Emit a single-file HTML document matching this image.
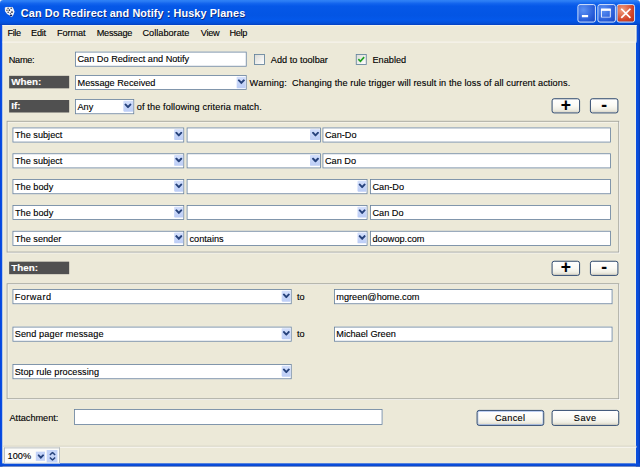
<!DOCTYPE html>
<html><head><meta charset="utf-8"><title>Can Do Redirect and Notify : Husky Planes</title>
<style>
html,body{margin:0;padding:0;}
body{width:640px;height:467px;overflow:hidden;background:#ece9d8;}
#w{position:absolute;left:0;top:0;width:768px;height:560px;transform:scale(0.833333);transform-origin:0 0;font-family:"Liberation Sans",sans-serif;font-size:11px;color:#000;background:#ece9d8;overflow:hidden;-webkit-text-stroke:0.15px currentColor;font-kerning:none;}
#w div,#w span,#w i,#w b,#w svg{position:absolute;box-sizing:border-box;}
#title{left:0;top:0;width:768px;height:30px;background:linear-gradient(#2f82f6 0,#2a7cf4 5%,#1466ee 13%,#0558e8 24%,#0355e4 60%,#0458ea 80%,#0450d8 93%,#033fc0 100%);border-radius:4px 4px 0 0;}
#title .t{left:25px;top:9.1px;-webkit-text-stroke:0;letter-spacing:0.12px;color:#fff;font-weight:bold;font-size:13px;line-height:16px;white-space:nowrap;text-shadow:1px 1px 0 #0a2a80;}
.tb{top:5px;width:22px;height:21.5px;border:1px solid #fff;border-radius:3px;background:radial-gradient(circle at 30% 30%,#5c92f4,#2458d6 70%,#1a48c0);}
#cls{background:radial-gradient(circle at 30% 30%,#f0a080,#d4462a 60%,#b83018);}
#bl{left:0;top:30px;width:3.4px;height:530px;background:linear-gradient(90deg,#0540d8,#0a50e6 50%,#0648d8);}
#br{left:762.9px;top:30px;width:5.1px;height:530px;background:linear-gradient(90deg,#0a50e0,#0a4cd8 60%,#0536b0);}
#bb{left:0;top:555.6px;width:768px;height:4.4px;background:linear-gradient(#0a50e0,#0a4cd8 60%,#0536b0);}
#menu{left:4px;top:30px;width:760px;height:20px;background:#ece9d8;}
#menu span{top:2px;line-height:14px;font-size:11px;white-space:nowrap;}
.l{font-size:11px;line-height:13px;white-space:nowrap;margin-top:1px;}
.dk{background:#505050;color:#fff;font-weight:bold;font-size:11.8px;line-height:14px;padding-left:2.8px;height:15px;width:72.4px;left:10.7px;white-space:nowrap;}
.in,.se{background:#fff;border:1px solid #69829c;font-size:11px;line-height:15px;padding:1px 0 0 2px;white-space:nowrap;overflow:hidden;height:18.3px;}
.se i{right:0;top:1px;width:11.5px;height:13.6px;background:linear-gradient(#d3dffb,#bccdf6);border-radius:1px;}
.se i svg{left:1.2px;top:3.2px;width:9.2px;height:6.6px;}
.bx{border:1px solid #9c9e9a;box-shadow:inset 1px 1px 0 #fcfcf8,1px 1px 0 #fcfcf8;}
.bt{border:1px solid #0c2d5e;border-radius:3px;background:linear-gradient(#fff 0,#fbfaf4 50%,#efeee4 80%,#d9d5c5 100%);font-size:11px;line-height:17px;text-align:center;height:19px;}
.pm{width:34px;height:18.5px;font-weight:bold;font-size:21px;line-height:14px;overflow:hidden;}
.cb{width:13px;height:13px;border:1px solid #61809c;background:linear-gradient(135deg,#dcdcd7,#fff);}
</style></head><body>
<div id="w">
<div style="left:0;top:0;width:768px;height:8px;background:#f4f7fd"></div>
<div id="title"><svg style="left:5px;top:8px;width:13.2px;height:13.2px" viewBox="0 0 11 11"><path d="M0.6 1.2 Q2 -0.2 5 0.3 L8.2 0.2 Q9.6 2 10.4 5.2 Q9.6 8.6 7.6 10.6 Q6 10.2 5.2 8.6 Q2.4 7.6 0.8 4.6 Z" fill="#eef1f8"/><circle cx="3.9" cy="1.6" r="0.7" fill="#1a2340"/><circle cx="7" cy="1.6" r="0.7" fill="#1a2340"/><circle cx="2.8" cy="3.6" r="0.8" fill="#6a5a20"/><circle cx="5.2" cy="3.5" r="0.8" fill="#1a2340"/><circle cx="4" cy="5.6" r="0.7" fill="#1a2340"/><circle cx="7.8" cy="5.4" r="0.9" fill="#1a2340"/><circle cx="6.2" cy="6.6" r="0.6" fill="#1a2340"/><ellipse cx="6.8" cy="8.8" rx="1.3" ry="0.9" fill="#0a1a60"/></svg><div class="t">Can Do Redirect and Notify : Husky Planes</div>
<div class="tb" style="left:693px"><svg style="left:4px;top:12px;width:8px;height:3px"><rect width="8" height="3" fill="#fff"/></svg></div>
<div class="tb" style="left:716.5px"><svg style="left:3.6px;top:4px;width:12px;height:11.4px"><rect x="0.6" y="1.5" width="10.8" height="9.3" fill="none" stroke="#fff" stroke-width="1.2"/><rect x="0" y="0" width="12" height="3" fill="#fff"/></svg></div>
<div class="tb" id="cls" style="left:740px"><svg style="left:3px;top:3px;width:14px;height:14px"><path d="M1.5 1.5 L12.5 12.5 M12.5 1.5 L1.5 12.5" stroke="#fff" stroke-width="2.1" fill="none"/></svg></div>
</div>
<div id="bl"></div><div id="br"></div><div id="bb"></div>
<div id="menu">
<span style="left:5.0px;letter-spacing:-0.5px">File</span>
<span style="left:33.2px;letter-spacing:-0.25px">Edit</span>
<span style="left:64.4px;letter-spacing:-0.1px">Format</span>
<span style="left:112.0px;letter-spacing:-0.3px">Message</span>
<span style="left:167.0px;letter-spacing:0px">Collaborate</span>
<span style="left:236.8px;letter-spacing:-0.4px">View</span>
<span style="left:271.4px;letter-spacing:-0.4px">Help</span>
</div>
<div style="left:3.3px;top:49.5px;width:761px;height:1.6px;background:#fbfaf6"></div>
<div style="left:3.3px;top:30px;width:1.1px;height:526px;background:#f6f5ee"></div>
<div style="left:761.8px;top:30px;width:1.1px;height:526px;background:#f4f3ea"></div>
<div style="left:3.3px;top:30px;width:761px;height:1px;background:#f6f5ee"></div>
<div class="l" style="left:10.4px;top:65px;letter-spacing:-0.3px">Name:</div>
<div class="in" style="left:90px;top:62px;width:206px">Can Do Redirect and Notify</div>
<div class="cb" style="left:305px;top:65px"></div>
<div class="l" style="left:325px;top:65px">Add to toolbar</div>
<div class="cb" style="left:427px;top:65px"><svg style="left:1px;top:1px;width:9px;height:9px" viewBox="0 0 9 9"><path d="M1 4 L3.5 6.5 L8 1.5" fill="none" stroke="#21a121" stroke-width="2"/></svg></div>
<div class="l" style="left:447px;top:65px">Enabled</div>
<div class="dk" style="top:91px">When:</div>
<div class="se" style="left:90px;top:90px;width:206px">Message Received<i><svg viewBox="0 0 9 6.5"><path d="M0.9 0.6 L4.5 4.4 L8.1 0.6" fill="none" stroke="#27437c" stroke-width="2.3" stroke-linejoin="miter"/></svg></i></div>
<div class="l" style="left:299.4px;top:92px;letter-spacing:0.1px">Warning:&nbsp; Changing the rule trigger will result in the loss of all current actions.</div>
<div class="dk" style="top:120px">If:</div>
<div class="se" style="left:90px;top:118.5px;width:70.5px">Any<i><svg viewBox="0 0 9 6.5"><path d="M0.9 0.6 L4.5 4.4 L8.1 0.6" fill="none" stroke="#27437c" stroke-width="2.3" stroke-linejoin="miter"/></svg></i></div>
<div class="l" style="left:164px;top:121px;letter-spacing:0.15px">of the following criteria match.</div>
<div class="bt pm" style="left:662px;top:117.5px">+</div>
<div class="bt pm" style="left:708px;top:117.5px">-</div>
<div class="bx" style="left:8.4px;top:145.3px;width:734.2px;height:157.6px"></div>
<div class="se" style="left:15px;top:152.6px;width:206px">The subject<i><svg viewBox="0 0 9 6.5"><path d="M0.9 0.6 L4.5 4.4 L8.1 0.6" fill="none" stroke="#27437c" stroke-width="2.3" stroke-linejoin="miter"/></svg></i></div>
<div class="se" style="left:224.4px;top:152.6px;width:160.5px"><i><svg viewBox="0 0 9 6.5"><path d="M0.9 0.6 L4.5 4.4 L8.1 0.6" fill="none" stroke="#27437c" stroke-width="2.3" stroke-linejoin="miter"/></svg></i></div>
<div class="in" style="left:387px;top:152.6px;width:346px">Can-Do</div>
<div class="se" style="left:15px;top:183.6px;width:206px">The subject<i><svg viewBox="0 0 9 6.5"><path d="M0.9 0.6 L4.5 4.4 L8.1 0.6" fill="none" stroke="#27437c" stroke-width="2.3" stroke-linejoin="miter"/></svg></i></div>
<div class="se" style="left:224.4px;top:183.6px;width:160.5px"><i><svg viewBox="0 0 9 6.5"><path d="M0.9 0.6 L4.5 4.4 L8.1 0.6" fill="none" stroke="#27437c" stroke-width="2.3" stroke-linejoin="miter"/></svg></i></div>
<div class="in" style="left:387px;top:183.6px;width:346px">Can Do</div>
<div class="se" style="left:15px;top:214.6px;width:206px">The body<i><svg viewBox="0 0 9 6.5"><path d="M0.9 0.6 L4.5 4.4 L8.1 0.6" fill="none" stroke="#27437c" stroke-width="2.3" stroke-linejoin="miter"/></svg></i></div>
<div class="se" style="left:224.4px;top:214.6px;width:217px"><i><svg viewBox="0 0 9 6.5"><path d="M0.9 0.6 L4.5 4.4 L8.1 0.6" fill="none" stroke="#27437c" stroke-width="2.3" stroke-linejoin="miter"/></svg></i></div>
<div class="in" style="left:444px;top:214.6px;width:289px">Can-Do</div>
<div class="se" style="left:15px;top:245.6px;width:206px">The body<i><svg viewBox="0 0 9 6.5"><path d="M0.9 0.6 L4.5 4.4 L8.1 0.6" fill="none" stroke="#27437c" stroke-width="2.3" stroke-linejoin="miter"/></svg></i></div>
<div class="se" style="left:224.4px;top:245.6px;width:217px"><i><svg viewBox="0 0 9 6.5"><path d="M0.9 0.6 L4.5 4.4 L8.1 0.6" fill="none" stroke="#27437c" stroke-width="2.3" stroke-linejoin="miter"/></svg></i></div>
<div class="in" style="left:444px;top:245.6px;width:289px">Can Do</div>
<div class="se" style="left:15px;top:276.6px;width:206px">The sender<i><svg viewBox="0 0 9 6.5"><path d="M0.9 0.6 L4.5 4.4 L8.1 0.6" fill="none" stroke="#27437c" stroke-width="2.3" stroke-linejoin="miter"/></svg></i></div>
<div class="se" style="left:224.4px;top:276.6px;width:217px">contains<i><svg viewBox="0 0 9 6.5"><path d="M0.9 0.6 L4.5 4.4 L8.1 0.6" fill="none" stroke="#27437c" stroke-width="2.3" stroke-linejoin="miter"/></svg></i></div>
<div class="in" style="left:444px;top:276.6px;width:289px">doowop.com</div>
<div class="dk" style="top:314.4px">Then:</div>
<div class="bt pm" style="left:662px;top:312.6px">+</div>
<div class="bt pm" style="left:708px;top:312.6px">-</div>
<div class="bx" style="left:8.4px;top:339.8px;width:734.2px;height:139px"></div>
<div class="se" style="left:15px;top:346.5px;width:335px;letter-spacing:0.55px;padding-left:1.6px">Forward<i><svg viewBox="0 0 9 6.5"><path d="M0.9 0.6 L4.5 4.4 L8.1 0.6" fill="none" stroke="#27437c" stroke-width="2.3" stroke-linejoin="miter"/></svg></i></div>
<div class="l" style="left:356.4px;top:349.0px">to</div>
<div class="in" style="left:400.5px;top:346.5px;width:334.5px">mgreen@home.com</div>
<div class="se" style="left:15px;top:391.5px;width:335px;letter-spacing:0.12px;padding-left:1.6px">Send pager message<i><svg viewBox="0 0 9 6.5"><path d="M0.9 0.6 L4.5 4.4 L8.1 0.6" fill="none" stroke="#27437c" stroke-width="2.3" stroke-linejoin="miter"/></svg></i></div>
<div class="l" style="left:356.4px;top:394.0px">to</div>
<div class="in" style="left:400.5px;top:391.5px;width:334.5px">Michael Green</div>
<div class="se" style="left:15px;top:436.5px;width:335px;letter-spacing:0.05px;padding-left:1.6px">Stop rule processing<i><svg viewBox="0 0 9 6.5"><path d="M0.9 0.6 L4.5 4.4 L8.1 0.6" fill="none" stroke="#27437c" stroke-width="2.3" stroke-linejoin="miter"/></svg></i></div>
<div class="l" style="left:11.4px;top:494px">Attachment:</div>
<div class="in" style="left:88.5px;top:491.4px;width:370.5px"></div>
<div class="bt" style="left:571.6px;top:492px;width:81px;box-shadow:inset 0 0 0 1px #a8c0ee;letter-spacing:0.35px">Cancel</div>
<div class="bt" style="left:661.7px;top:492px;width:81px;letter-spacing:0.5px">Save</div>
<div style="left:4px;top:535px;width:760px;height:1px;background:#c5c2b2"></div>
<div style="left:4px;top:536px;width:760px;height:1px;background:#fff"></div>
<div style="left:4.6px;top:537.2px;width:67.6px;height:18.6px;background:#fcfcfa;border:1px solid #aeb4b8;border-bottom-color:#e8e8e0"></div>
<div class="l" style="left:8.9px;top:539.8px;letter-spacing:0.15px">100%</div>
<div style="left:43.2px;top:541.5px;width:10.5px;height:11.5px;background:#c3d3f8"><svg style="left:1.5px;top:3px;width:8px;height:6px" viewBox="0 0 8 6"><path d="M0.6 0.6 L4 4.2 L7.4 0.6" fill="none" stroke="#27437c" stroke-width="2.2"/></svg></div>
<div style="left:55.8px;top:540px;width:13.5px;height:14.5px;background:#c3d3f8"><svg style="left:3px;top:2px;width:8px;height:11px" viewBox="0 0 8 11"><path d="M0.8 4 L4 1 L7.2 4 M0.8 7 L4 10 L7.2 7" fill="none" stroke="#27437c" stroke-width="1.9"/></svg></div>
</div>
</body></html>
